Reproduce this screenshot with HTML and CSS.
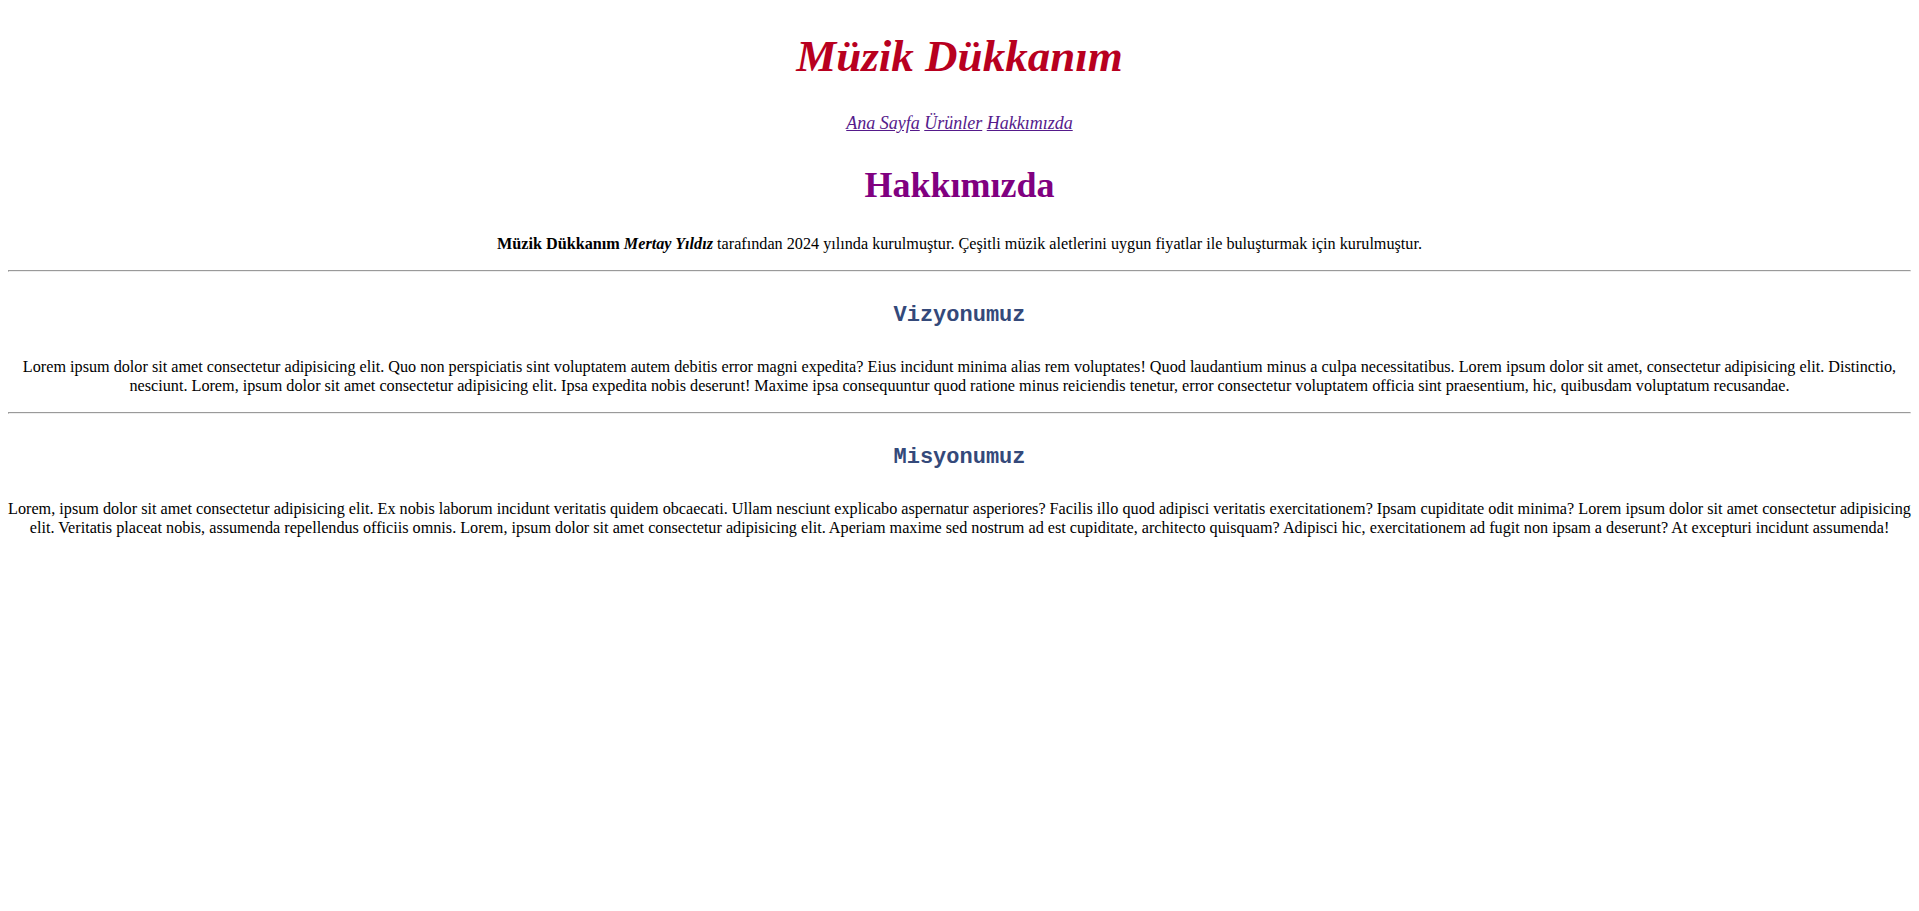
FILE: index.html
```html
<!DOCTYPE html>
<html lang="tr">
<head>
<meta charset="utf-8">
<title>Müzik Dükkanım - Hakkımızda</title>
<link rel="stylesheet" href="styles.css">
</head>
<body>
<h1 class="site-title">Müzik Dükkanım</h1>
<nav class="nav">
<a href="#" class="nav-link">Ana Sayfa</a>
<a href="#" class="nav-link">Ürünler</a>
<a href="#" class="nav-link">Hakkımızda</a>
</nav>
<h2 class="page-title">Hakkımızda</h2>
<p class="text"><b>Müzik Dükkanım</b> <b><i>Mertay Yıldız</i></b> tarafından 2024 yılında kurulmuştur. Çeşitli müzik aletlerini uygun fiyatlar ile buluşturmak için kurulmuştur.</p>
<hr class="rule">
<h3 class="section-title">Vizyonumuz</h3>
<p class="text">Lorem ipsum dolor sit amet consectetur adipisicing elit. Quo non perspiciatis sint voluptatem autem debitis error magni expedita? Eius incidunt minima alias rem voluptates! Quod laudantium minus a culpa necessitatibus. Lorem ipsum dolor sit amet, consectetur adipisicing elit. Distinctio, nesciunt. Lorem, ipsum dolor sit amet consectetur adipisicing elit. Ipsa expedita nobis deserunt! Maxime ipsa consequuntur quod ratione minus reiciendis tenetur, error consectetur voluptatem officia sint praesentium, hic, quibusdam voluptatum recusandae.</p>
<hr class="rule">
<h3 class="section-title">Misyonumuz</h3>
<p class="text">Lorem, ipsum dolor sit amet consectetur adipisicing elit. Ex nobis laborum incidunt veritatis quidem obcaecati. Ullam nesciunt explicabo aspernatur asperiores? Facilis illo quod adipisci veritatis exercitationem? Ipsam cupiditate odit minima? Lorem ipsum dolor sit amet consectetur adipisicing elit. Veritatis placeat nobis, assumenda repellendus officiis omnis. Lorem, ipsum dolor sit amet consectetur adipisicing elit. Aperiam maxime sed nostrum ad est cupiditate, architecto quisquam? Adipisci hic, exercitationem ad fugit non ipsam a deserunt? At excepturi incidunt assumenda!</p>
</body>
</html>
```

FILE: styles.css
```css
body {
  margin: 0;
  padding: 8px;
  font-family: "Liberation Serif", "Times New Roman", serif;
  font-size: 16px;
  color: #000;
  background: #fff;
  text-align: center;
}

.site-title {
  margin: 22px 0 31px;
  font-size: 45px;
  font-style: italic;
  font-weight: bold;
  color: #b8001f;
}

.nav {
  margin: 0;
  font-size: 18px;
}

.nav-link {
  color: #551a8b;
  font-style: italic;
}

.page-title {
  margin: 30px 0 28.5px;
  font-size: 36px;
  font-weight: bold;
  color: #800080;
}

.text {
  margin: 16px 0;
  font-size: 16.2px;
}

.rule {
  margin: 8px 0;
}

.section-title {
  margin: 31px 0 30px;
  font-family: "Liberation Mono", "Courier New", monospace;
  font-size: 22px;
  font-weight: bold;
  color: #34497a;
}
```
